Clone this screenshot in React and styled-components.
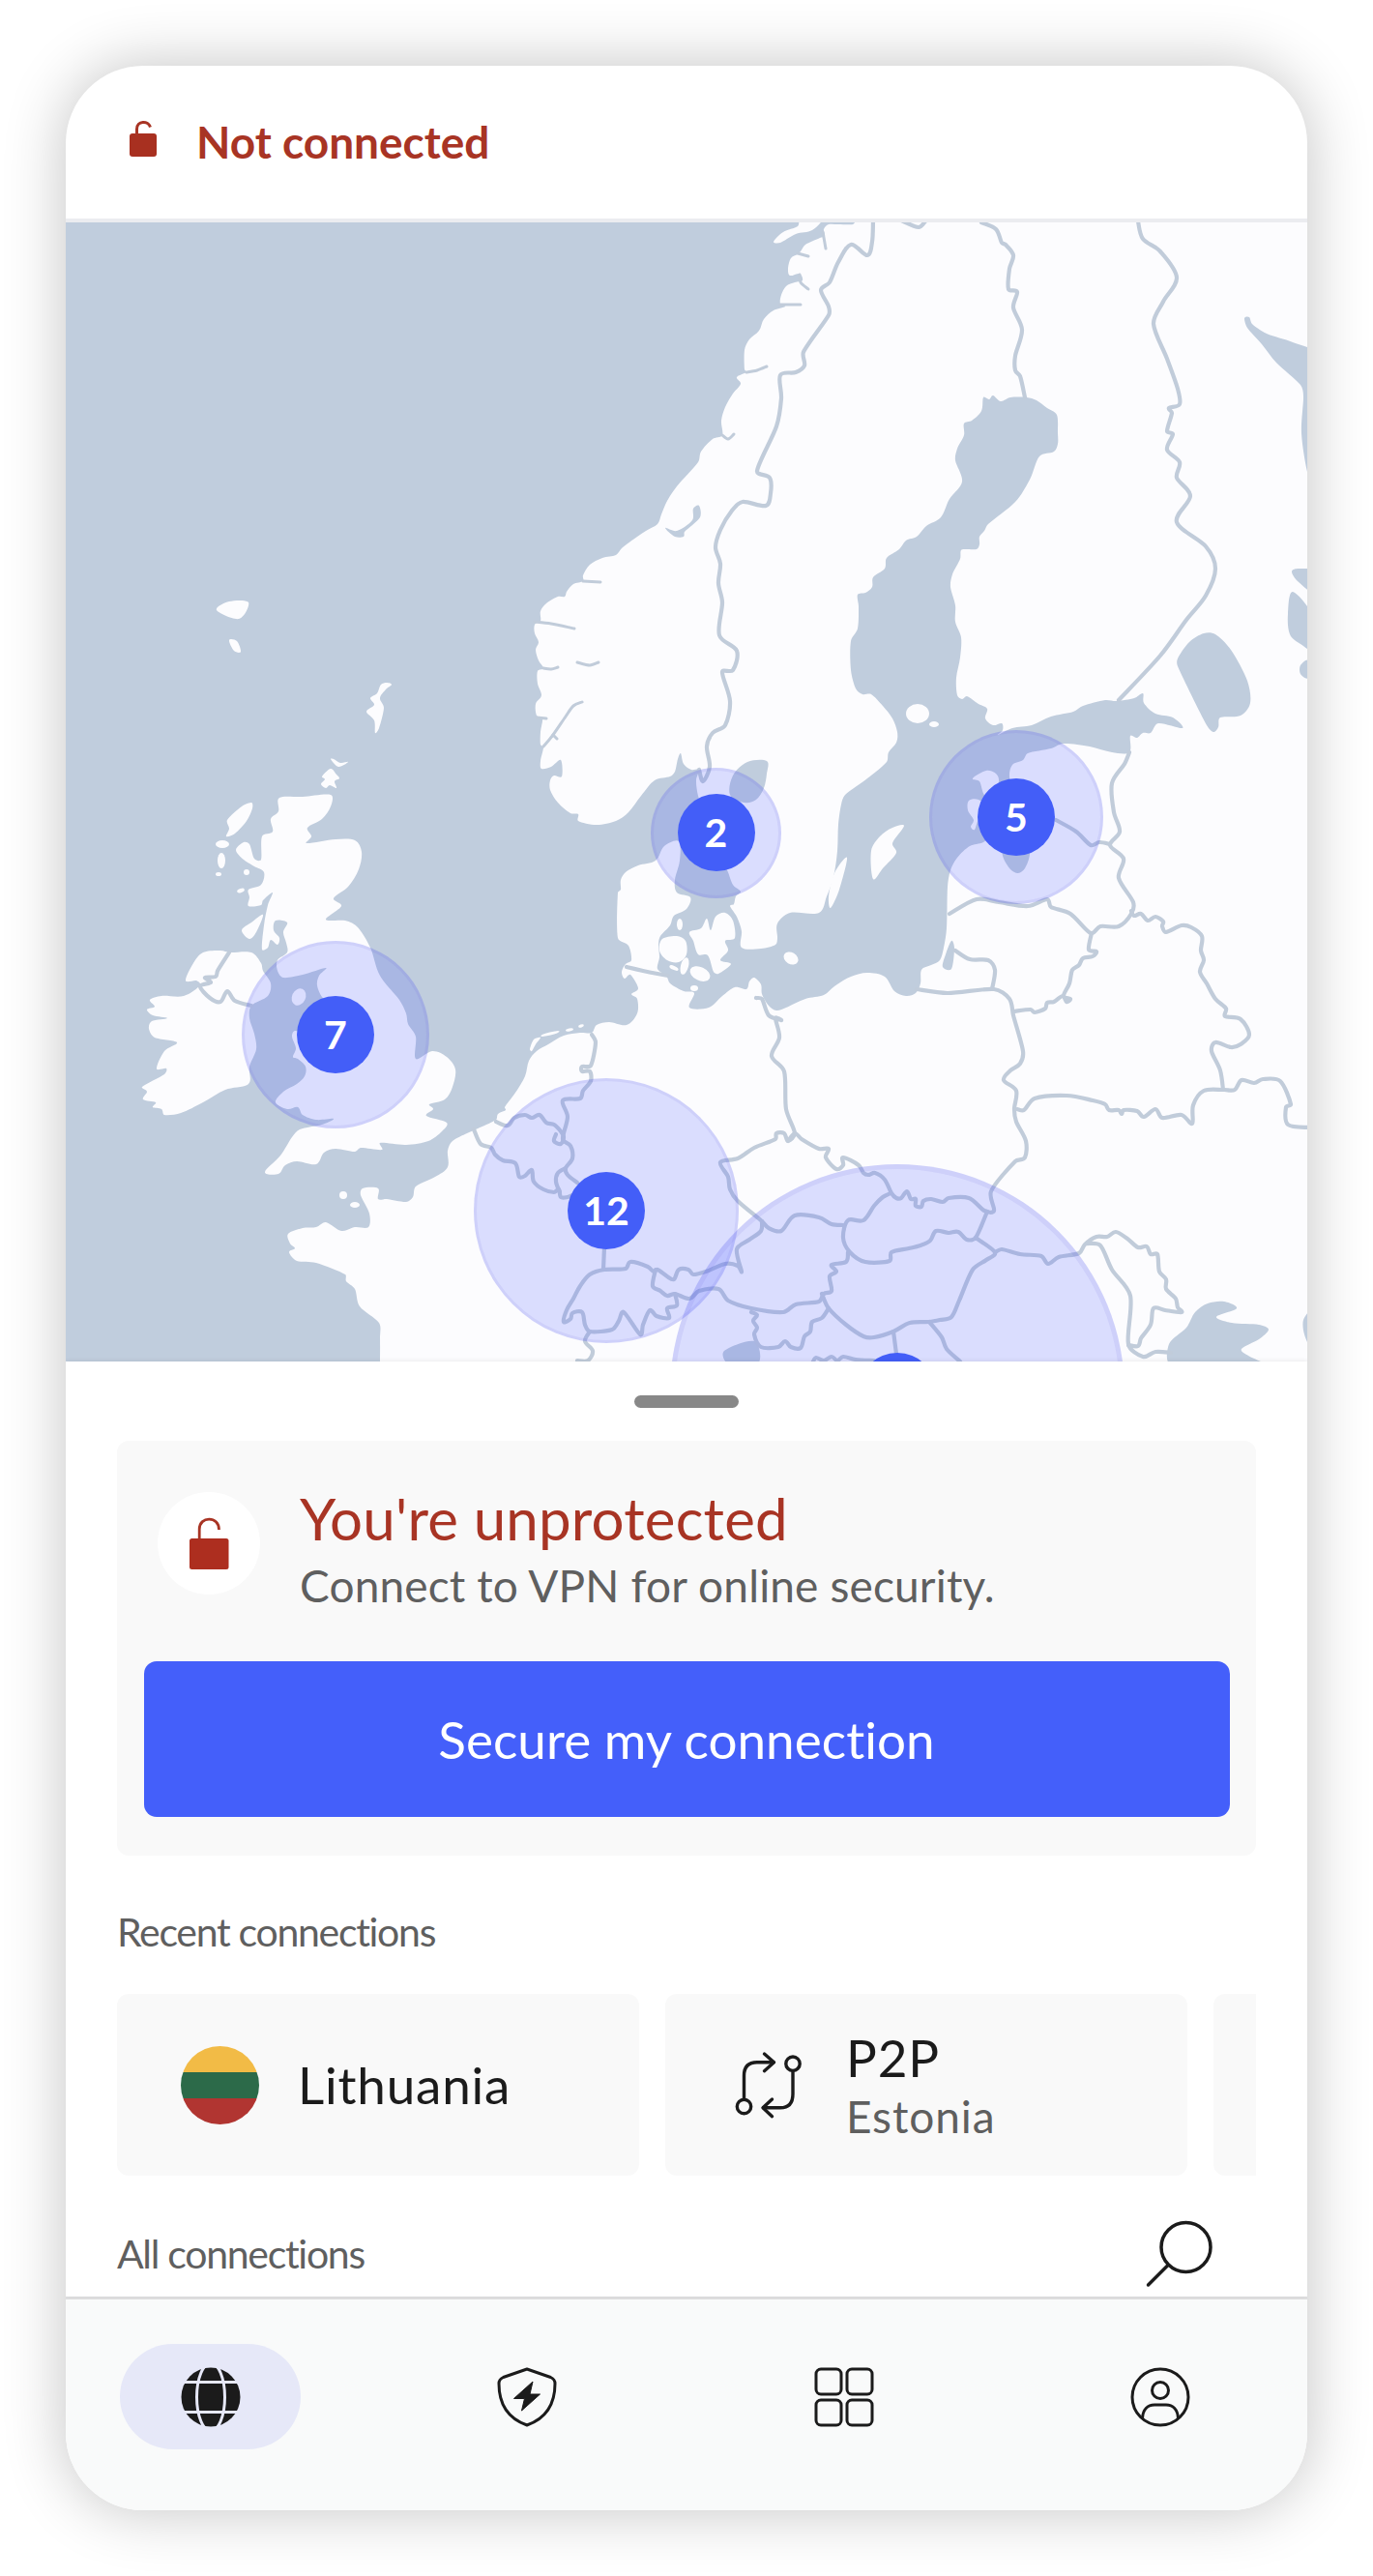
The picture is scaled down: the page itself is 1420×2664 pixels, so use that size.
import styled, { createGlobalStyle } from "styled-components";

const GlobalStyle = createGlobalStyle`
  body {
    margin: 0;
    background: #ffffff;
    font-family: Lato, "Open Sans", sans-serif;
    font-variant-ligatures: none;
  }
`

const Page = styled.div`
  box-sizing: border-box;
  width: 1420px;
  height: 2664px;
  padding: 68px;
`

const Phone = styled.div`
  display: flex;
  flex-direction: column;
  width: 1284px;
  height: 2528px;
  border-radius: 80px;
  overflow: hidden;
  background: #ffffff;
  box-shadow: 0 0 64px rgba(0, 0, 0, 0.24);
`

const Header = styled.header`
  display: flex;
  align-items: center;
  gap: 38px;
  height: 157px;
  padding: 0 0 1px 63px;
  border-bottom: 4px solid #ebecf0;
  color: #a83424;
  font-size: 46px;
  font-weight: 700;
`

const MapArea = styled.div`
  position: relative;
  flex: none;
  height: 1178px;
  overflow: hidden;
  background: #c0cddd;
`

const MapSvg = styled.svg`
  display: block;
  width: 100%;
  height: 100%;
`

const Cluster = styled.div`
  position: absolute;
  left: ${(p) => p.$x - 68 - p.$r}px;
  top: ${(p) => p.$y - 230 - p.$r}px;
  box-sizing: border-box;
  display: flex;
  align-items: center;
  justify-content: center;
  width: ${(p) => p.$r * 2}px;
  height: ${(p) => p.$r * 2}px;
  border: ${(p) => (p.$r > 200 ? 5 : 3)}px solid rgba(100, 90, 220, 0.11);
  border-radius: 50%;
  background: rgba(64, 82, 255, 0.18);
`

const Count = styled.span`
  flex: none;
  width: 80px;
  height: 80px;
  border-radius: 50%;
  background: #435ef8;
  color: #ffffff;
  font-size: 41px;
  font-weight: 700;
  line-height: 80px;
  text-align: center;
`

const Sheet = styled.main`
  position: relative;
  flex: 1;
  display: flex;
  flex-direction: column;
  padding: 35px 53px 0;
  background: #ffffff;
  box-shadow: 0 -1px 4px rgba(0, 0, 0, 0.07);
`

const Handle = styled.div`
  align-self: center;
  width: 108px;
  height: 13px;
  margin-bottom: 34px;
  border-radius: 7px;
  background: #888888;
`

const StatusCard = styled.section`
  padding: 46px 27.5px 40px;
  border-radius: 12px;
  background: #f9f9f9;
`

const StatusTop = styled.div`
  display: flex;
  gap: 41px;
  margin-bottom: 50px;
  padding-left: 14.500px;
`

const LockCircle = styled.div`
  display: flex;
  align-items: center;
  justify-content: center;
  width: 106px;
  height: 106px;
  margin-top: 7px;
  border-radius: 50%;
  background: #ffffff;
`

const Title = styled.h1`
  margin: 0 0 8px;
  color: #a83424;
  font-size: 60px;
  font-weight: 400;
  line-height: 68px;
  letter-spacing: 0.2px;
`

const Subtitle = styled.p`
  margin: 0;
  color: #5f5f5f;
  font-size: 46px;
  line-height: 56px;
  letter-spacing: 0.14px;
`

const SecureButton = styled.button`
  display: block;
  width: 100%;
  height: 161px;
  padding: 0;
  border: none;
  border-radius: 13px;
  background: #445ffa;
  color: #ffffff;
  font-family: inherit;
  font-size: 53px;
  letter-spacing: 0.05px;
  font-variant-ligatures: none;
`

const Label = styled.h2`
  margin: 0;
  color: #5f5f5f;
  font-size: 41px;
  font-weight: 400;
  line-height: 50px;
  letter-spacing: -1.3px;
`

const RecentSection = styled.section`
  display: flex;
  flex-direction: column;
  gap: 39px;
  margin-top: 54px;
`

const Recents = styled.div`
  display: flex;
  gap: 27px;
  overflow: hidden;
`

const RecentCard = styled.div`
  flex: none;
  box-sizing: border-box;
  display: flex;
  align-items: center;
  gap: 40px;
  width: 540px;
  height: 188px;
  padding-left: 66px;
  border-radius: 12px;
  background: #f9f9f9;
`

const Flag = styled.div`
  width: 81px;
  height: 81px;
  border-radius: 50%;
  background: linear-gradient(#f2bb46 33.3%, #2c6a49 33.3% 66.6%, #b13531 66.6%);
`

const Place = styled.div`
  color: #1b1b1b;
  font-size: 53px;
  line-height: 64px;
  letter-spacing: 0.8px;
`

const PlaceNote = styled.div`
  padding-top: 1px;
  color: #5f5f5f;
  font-size: 46px;
  line-height: 56px;
  letter-spacing: 0.9px;
`

const AllRow = styled.div`
  display: flex;
  align-items: center;
  justify-content: space-between;
  height: 70px;
  margin-top: 46px;
  padding-right: 43px;
`

const Nav = styled.nav`
  flex: none;
  box-sizing: border-box;
  display: flex;
  justify-content: space-between;
  height: 221px;
  padding: 46px 58px 0 56px;
  border-top: 3px solid #dededf;
  background: #f9fafa;
`

const NavItem = styled.a`
  display: flex;
  align-items: center;
  justify-content: center;
  width: 187px;
  height: 109px;
  border-radius: 55px;
  background: ${(p) => (p.$active ? "#e6e8f8" : "transparent")};
`

// turns "x,y x,y ..." into a rounded path through every point
const curve = (str, closed) => {
  const pts = str.trim().split(/\s+/).map((p) => p.split(",").map(Number));
  const n = pts.length;
  const at = (i) => (closed ? pts[(i + n) % n] : pts[Math.max(0, Math.min(n - 1, i))]);
  let d = `M${pts[0]}`;
  for (let i = 0; i < (closed ? n : n - 1); i++) {
    const [a, b, c, e] = [at(i - 1), at(i), at(i + 1), at(i + 2)];
    // handles never longer than the segment allows, so close points don't loop
    const len = Math.hypot(c[0] - b[0], c[1] - b[1]);
    const h = (p, q) => {
      const l = Math.hypot(q[0] - p[0], q[1] - p[1]) || 1;
      const k = Math.min(l / 6, len / 3) / l;
      return [(q[0] - p[0]) * k, (q[1] - p[1]) * k];
    };
    const u = h(a, c);
    const v = h(b, e);
    d += `C${(b[0] + u[0]).toFixed(1)} ${(b[1] + u[1]).toFixed(1)} ${(c[0] - v[0]).toFixed(1)} ${(c[1] - v[1]).toFixed(1)} ${c[0]} ${c[1]}`;
  }
  return closed ? d + "Z" : d;
};

const mainland = `
885,228 882,232 867,232 857,232 852,237 853,244 848,246 833,253 828,260 825,263 818,267 815,278 817,285 827,283 830,290 822,292
813,296 808,305 807,314 812,317 800,321 790,330 785,342 775,351 770,362 770,382 772,385 762,390 766,397 758,407
750,421 746,435 747,450 737,454 725,467 722,478 700,503 690,518 684,532 680,542 668,549 652,560 643,567 637,574 623,577
610,584 603,595 603,601 593,604 586,612 584,617 577,617 565,624 559,632 559,642 553,646 553,655 557,664 554,672
557,683 562,691 556,694 556,707 560,719 554,728 555,740 561,743 559,757 559,770 562,773 559,787 560,795 570,793
580,786 581,803 573,802 569,807 569,817 577,830 590,841 598,842 598,849 617,853 637,849 650,840 663,823 677,807
693,803 698,798 701,785 704,779 707,790 715,796 723,796 720,807 722,823 727,837 740,880 752,900 758,915 766,922
761,927 759,935 755,937 762,948 767,963 767,980 787,981 802,977 804,970 804,955 817,944 847,944 855,927 862,907
866,880 867,853 870,832 874,822 897,805 917,788 919,778 927,768 928,757 923,743 913,730 901,718 892,718 885,712
880,693 880,663 887,650 888,627 887,615 895,613 902,607 903,597 915,588 917,577 930,568 937,559 948,555 958,544
973,535 982,516 995,498 988,476 990,464 997,450 997,438 1005,435 1015,425 1017,411 1023,413 1027,409 1035,415
1045,411 1062,411 1072,414 1083,422 1093,429 1094,448 1094,459 1090,467 1075,472 1065,496 1050,519 1022,542
1018,549 1013,555 1013,563 1010,568 1000,568 994,569 993,578 985,594 983,607 988,626 988,643 994,659 993,680
989,701 990,719 995,723 1000,720 1012,728 1021,733 1019,743 1027,750 1036,748 1037,755 1032,760 1047,753 1067,750
1087,741 1110,736 1120,730 1143,724 1155,725 1173,722 1182,717 1183,727 1195,738 1213,742 1223,753 1198,748
1190,758 1182,758 1176,763 1169,761 1168,778 1150,778 1127,772 1100,769 1087,774 1063,779 1058,786 1047,791
1044,803 1050,830 1062,860 1065,883 1060,898 1053,903 1045,899 1037,885 1036,866 1029,862 1017,871 1003,875 990,887
983,900 980,917 979,960 976,980 972,993 963,998 953,1003 952,1017 947,1027 937,1030 925,1025 915,1010 897,1006
880,1010 863,1020 852,1029 833,1033 813,1042 803,1045 795,1040 788,1028 787,1018 780,1011 775,1015 772,1023
760,1021 747,1030 733,1042 713,1042 718,1027 707,1025 693,1017 689,1009 680,1002 682,990 681,977 683,968 693,957 697,947
710,940 714,928 700,923 698,910 703,890 702,870 687,875 678,890 660,895 647,902 642,910 642,920 639,923 639,970
650,978 653,993 647,997 643,1005 646,1012 652,1008 660,1022 653,1028 659,1033 659,1048 648,1060 630,1057 617,1060
612,1068 600,1068 583,1071 567,1080 555,1087 547,1097 543,1113 533,1130 522,1145 523,1148 515,1152 513,1158
492,1168 483,1172 468,1180 463,1190 463,1207 450,1217 430,1227 427,1238 420,1243 400,1240 391,1240 391,1229
375,1229 373,1236 382,1255 381,1269 367,1269 353,1273 337,1264 327,1269 313,1270 298,1276 300,1286 305,1291
299,1295 307,1304 327,1306 357,1318 358,1325 367,1333 372,1351 392,1368 393,1383 393,1412`

const islands = [
  // Great Britain
  `289,825 313,824 342,822 342,834 333,847 318,856 322,865 317,872 347,868 367,869 374,881 371,899 360,917 345,929
  353,937 337,951 357,952 370,959 383,980 393,1009 413,1034 420,1048 422,1059 430,1072 430,1095 447,1087 462,1093
  471,1106 468,1124 460,1137 444,1142 448,1147 441,1154 462,1161 457,1170 443,1180 420,1184 393,1182 395,1189 373,1187
  367,1191 347,1188 335,1192 327,1204 307,1201 295,1205 288,1214 274,1212 290,1195 302,1176 310,1168 333,1163
  345,1157 327,1158 313,1153 308,1145 297,1147 285,1140 293,1129 307,1121 315,1113 316,1103 308,1095 303,1093
  306,1084 302,1072 305,1066 330,1070 345,1045 333,1031 328,1019 330,1009 337,1001 313,1008 293,1011 287,1004
  287,993 297,985 296,975 293,964 297,954 285,952 283,962 289,970 287,977 280,972 277,980 271,982 273,957 277,936
  282,923 272,931 270,936 257,937 258,928 257,920 270,915 273,902 263,896 252,889 244,879 252,871 258,873 263,888
  270,889 271,865 282,860 280,847 288,839`,
  // Ireland
  `210,985 228,983 238,985 260,985 270,996 272,1004 280,1017 277,1030 260,1040 258,1053 263,1069 265,1085 258,1103
  257,1121 233,1127 210,1140 187,1151 170,1153 167,1147 158,1145 161,1140 148,1137 152,1129 147,1124 170,1111 172,1105
  162,1105 170,1087 183,1078 160,1073 154,1064 157,1056 173,1053 158,1050 152,1044 160,1041 155,1034 167,1030
  190,1030 207,1019 203,1014 192,1014 200,996`,
  "260,830 250,834 235,848 237,857 234,865 243,862 255,849 261,836",
  "272,946 260,954 250,962 258,971 265,964",
  "342,795 333,803 336,806 332,811 337,815 341,812 348,815 346,808 351,805 348,801",
  "342,785 350,793 360,788 352,789 345,785",
  "400,706 405,708 399,713 393,722 397,732 392,753 388,758 387,745 379,736 387,729 383,722 390,717 394,708",
  "224,631 237,622 257,623 247,640",
  "237,662 245,663 249,674 242,673",
  // Denmark
  "685,971 700,968 709,973 710,987 702,995 690,993 682,983",
  "713,964 725,960 731,950 735,962 740,948 750,944 758,952 760,970 750,973 753,983 745,993 756,997 743,1007 738,1005 732,988 722,987 717,973",
  "876,887 868,920 859,939 857,927 863,903",
  "935,854 923,872 927,882 913,898 903,909 901,880 910,865 923,856",
  "1006,805 1020,797 1030,800 1033,808 1027,822 1018,822 1013,808",
  "1002,828 1012,827 1020,835 1012,847 1008,858 1004,855 1007,848 1001,838",
  "548,1085 552,1075 559,1073 554,1080 550,1087",
  "800,250 810,240 825,234 828,226 850,226 840,238 823,242 807,251",
]

// cx, cy, rx, ry, rotation
const islets = [
  [309, 1031, 7, 9, 25], [230, 873, 7, 4, 0], [229, 890, 4, 8, 0], [226, 904, 3, 2, 0], [255, 902, 3, 3, 0],
  [249, 921, 4, 2, -20], [355, 1236, 4, 4, 0], [367, 1246, 5, 3, 0], [724, 1007, 11, 7, 25], [708, 999, 4, 9, 15],
  [703, 956, 3, 6, 0], [697, 1001, 5, 2, 25], [718, 1022, 4, 3, 0], [818, 991, 8, 6, 30], [949, 738, 12, 10, 0],
  [966, 749, 5, 3, 0], [569, 1069, 10, 1.6, -14], [589, 1065, 4, 1.5, -10], [601, 1061, 3, 1.5, -20],
]

const lakes = [
  "793,787 773,788 758,802 755,822 770,830 782,827 790,815 793,800",
  "1245,655 1230,664 1218,681 1218,689 1248,750 1255,757 1260,752 1262,742 1283,740 1293,727 1290,704 1273,672 1257,656",
  "1287,329 1292,328 1295,335 1310,345 1337,354 1358,366 1358,500 1352,488 1346,448 1348,410 1345,398 1320,375 1305,356 1290,339",
  "1336,591 1343,588 1358,591 1358,612 1342,601",
  "1337,612 1358,638 1358,671 1345,666 1334,656 1332,635",
  "1353,683 1345,688 1345,697 1353,701",
  "984,973 987,980 984,1002 975,1000 978,987",
  "1212,1412 1209,1390 1227,1373 1236,1357 1249,1348 1266,1346 1279,1353 1258,1362 1274,1368 1302,1370 1312,1375 1302,1385 1284,1395 1291,1402 1308,1412",
  "1356,1357 1348,1365 1349,1380 1356,1392",
  "749,1397 780,1387 784,1410 753,1410",
  "688,546 700,549 716,538 717,526 723,523 724,535 708,550 707,555 698,555",
]

const fjords = [
  "603,601 621,602", "553,643 570,645 594,650", "562,691 570,692 577,690", "597,685 610,688 619,685", "555,742 565,743",
  "602,726 593,730 585,741 572,760 562,772", "572,760 576,764", "807,315 828,315", "772,385 783,383 793,379", "747,450 753,454 759,449",
  "825,262 836,265", "827,284 828,292 836,299", "851,240 854,257",
]

const borders = [
  `903,229 902,250 897,264 880,253 867,271 858,292 849,300 857,317 857,326 831,364 832,378 823,385 807,388 808,412
  803,441 783,487 796,494 797,510 792,523 768,519 757,528 745,548 740,566 745,583 743,603 747,623 744,657 762,673
  758,693 747,695 755,725 750,750 737,758 731,772 734,793 727,808 723,796`,
  `1015,230 1030,237 1036,251 1040,253 1048,264 1044,278 1043,299 1052,302 1048,318 1057,341 1050,368 1050,383 1055,389 1060,411`,
  "932,228 950,235 957,229",
  `1177,229 1182,247 1200,260 1217,287 1203,312 1193,335 1207,371 1218,402 1220,418 1209,422 1212,427 1207,446 1213,449
  1207,465 1220,478 1217,494 1231,513 1217,540 1247,565 1257,588 1247,616 1227,641 1200,678 1157,724`,
  `1168,778 1163,790 1150,810 1152,840 1158,860 1148,874 1162,888 1157,908 1172,933 1170,945 1157,958 1138,958
  1128,965 1107,945 1087,938 1083,930 1063,937 1033,933 1010,930 982,945`,
  "1092,848 1113,860 1128,874 1137,871 1148,873",
  `1170,942 1173,947 1180,945 1187,952 1195,948 1203,953 1202,958 1206,964 1222,957 1232,959 1243,968 1242,983 1245,993 1241,1005 1248,1017
  1257,1033 1268,1043 1267,1051 1283,1054 1292,1070 1283,1080 1273,1083 1257,1078 1253,1087 1262,1107 1265,1127`,
  `1052,1147 1059,1148 1070,1136 1103,1133 1130,1138 1143,1142 1147,1148 1157,1148 1160,1152 1162,1148 1176,1149 1183,1155 1195,1147 1202,1156 1222,1153
  1233,1162 1234,1143 1245,1128 1266,1127 1277,1127 1284,1117 1297,1120 1306,1116 1324,1118 1335,1142 1330,1145 1332,1163 1354,1166`,
  `1129,965 1126,982 1134,984 1130,989 1120,991 1116,998 1109,1003 1106,1017 1100,1030 1107,1033 1103,1036 1099,1030 1090,1036 1083,1037 1081,1043 1070,1047 1066,1044 1048,1046`,
  "988,983 1003,992 1022,993 1029,1003 1026,1023",
  `948,1023 980,1027 1028,1023 1044,1033 1048,1050 1058,1087 1055,1100 1045,1107 1038,1117 1051,1128 1049,1147 1051,1160
  1061,1180 1060,1197 1050,1201 1025,1232 1028,1252 1018,1252 1002,1239 981,1239 975,1243 963,1240 955,1242 953,1248 947,1247 947,1240 942,1240 938,1232 932,1239
  927,1239 922,1234 915,1220 905,1213 898,1215 893,1213 888,1205 872,1197 872,1205 865,1209 854,1197 857,1188 847,1188 829,1178 822,1172 815,1180`,
  "921,1234 913,1238 904,1247 893,1262 877,1262 872,1280 879,1295 895,1305 920,1304 922,1295 940,1291 952,1288 962,1283 968,1273 981,1275 991,1274 1000,1282 1009,1280 1021,1253",
  "1009,1280 1029,1295 1020,1303 1006,1313 992,1345 984,1362 972,1365 961,1367 941,1368 924,1377 904,1383 893,1382 875,1370 857,1353 850,1338",
  `1029,1295 1036,1292 1055,1297 1077,1299 1084,1307 1095,1300 1116,1296 1122,1287 1134,1279 1145,1279 1154,1274 1166,1281 1177,1290 1186,1289 1190,1297 1197,1297
  1199,1315 1206,1323 1206,1333 1216,1343 1218,1352 1222,1357 1205,1355 1193,1353 1190,1370 1180,1384 1177,1392 1167,1391`,
  "1124,1286 1138,1288 1150,1313 1169,1340 1167,1390 1182,1403 1195,1398 1211,1399",
  "961,1367 974,1383 979,1395 993,1408",
  "924,1377 927,1400",
  `782,1032 788,1033 795,1050 808,1055 802,1053 806,1073 798,1092 811,1108 813,1147 822,1172 815,1180 811,1172 803,1172 802,1178 780,1187
  763,1198 745,1202 753,1217 755,1230 763,1242 788,1263 795,1270 808,1273 822,1257 847,1259 860,1266 872,1267`,
  `788,1263 787,1273 775,1282 762,1292 767,1315 763,1309 750,1307 730,1315 717,1318 712,1313 702,1313 697,1323 690,1320 680,1313 676,1315
  670,1310 652,1305 647,1312 625,1313 610,1318 600,1330 593,1343 586,1355 583,1367 590,1364 592,1358 602,1357 605,1370 610,1377 633,1375 640,1366 645,1357 662,1380
  665,1370 672,1355 679,1361 692,1363 690,1353 700,1350 698,1338`,
  `678,1313 675,1330 683,1335 690,1340 698,1338 713,1343 723,1335 743,1333 753,1345 777,1353 810,1357 823,1349 847,1346 852,1338 860,1335 858,1320 865,1315
  860,1308 875,1305 877,1295`,
  "777,1357 783,1360 779,1366 783,1373 780,1380 787,1393 805,1393 812,1387 818,1393 828,1394 832,1382 838,1377 840,1367 850,1363 857,1353",
  "625,1290 624,1313",
  "490,1168 497,1183 508,1187 512,1194 520,1200 533,1203 537,1217 543,1216 550,1210 552,1222 562,1230 573,1233 578,1230 580,1238 587,1238 592,1236",
  "513,1160 525,1164 532,1156 543,1153 550,1156 558,1153 565,1161 573,1163 580,1170 583,1176 580,1183 573,1180 575,1173",
  `612,1070 616,1078 611,1102 602,1103 602,1108 610,1108 611,1118 603,1128 600,1136 582,1138 587,1155 582,1178 590,1185
  592,1198 585,1208 587,1215 597,1223`,
  "585,1208 577,1213 575,1222 579,1233",
  "610,1377 605,1387 613,1397 608,1407 597,1407",
  "648,1000 665,1004 680,1007 691,1009",
  "841,1408 844,1404 852,1407 860,1403 866,1407 872,1403 885,1406 904,1407",
  "237,985 225,1004 223,1010 212,1011 218,1016 207,1020 217,1032 228,1036 235,1025 243,1035 260,1040",
]

const clusters = [
  { x: 347, y: 1069.5, r: 97, count: 7 },
  { x: 740.5, y: 861, r: 67.5, count: 2 },
  { x: 1051, y: 845, r: 90, count: 5 },
  { x: 627, y: 1252, r: 137, count: 12 },
  { x: 928, y: 1439, r: 235, count: "" },
]

const EuropeMap = () => (
  <MapSvg viewBox="68 230 1284 1178">
    <g fill="#fcfcfe">
      <path d={curve(mainland) + "L1360 1412L1360 226L885 226Z"} />
      {islands.map((p) => <path key={p} d={curve(p, true)} />)}
      {islets.map(([cx, cy, rx, ry, a]) => (
        <ellipse key={`${cx}-${cy}`} cx={cx} cy={cy} rx={rx} ry={ry} transform={`rotate(${a} ${cx} ${cy})`} />
      ))}
    </g>
    <g fill="#c0cddd">
      {lakes.map((p) => <path key={p} d={curve(p, true)} />)}
    </g>
    <g fill="none" stroke="#c1ccda" strokeLinecap="round" strokeLinejoin="round">
      {fjords.map((p) => <path key={p} d={curve(p)} strokeWidth="3" />)}
      {borders.map((p) => <path key={p} d={curve(p)} strokeWidth="4.2" />)}
    </g>
  </MapSvg>
)

const LockSvg = styled.svg`
  margin-bottom: 6px;
`

const SmallLock = () => (
  <LockSvg width="34" height="42" viewBox="131 124 34 42">
    <rect x="134" y="139" width="28" height="24" rx="3" fill="#a83020" />
    <path d="M141.5 140V134.5C141.5 125.5 153.5 125.5 155.5 132.5" fill="none" stroke="#a83424" strokeWidth="3" />
  </LockSvg>
)

const BigLock = () => (
  <svg width="44" height="56" viewBox="194 1568 44 56">
    <rect x="196" y="1591" width="40.5" height="32" rx="2.5" fill="#ad2e1f" />
    <path d="M206.2 1592V1581.5C206.2 1567.5 226.5 1567.5 226.5 1582" fill="none" stroke="#a83424" strokeWidth="2.8" />
  </svg>
)

const P2PIcon = () => (
  <svg width="81" height="81" viewBox="755 2115.5 81 81" fill="none" stroke="#1b1b1b" strokeWidth="3.4" strokeLinecap="round" strokeLinejoin="round">
    <circle cx="770.5" cy="2178" r="7.2" />
    <path d="M770.5 2170.500V2146Q770.5 2132.3 784 2132.3H801" />
    <path d="M791.5 2123.5L801.5 2132.3L791.5 2141.2" />
    <circle cx="821" cy="2133.7" r="7.2" />
    <path d="M821 2141.5V2165Q821 2179.3 808 2179.3H790.5" />
    <path d="M799.5 2170.5L790 2179.3L799.5 2188.2" />
  </svg>
)

const SearchIcon = () => (
  <svg width="72" height="70" viewBox="1184 2296 72 70" fill="none" stroke="#1b1b1b" strokeWidth="3.5" strokeLinecap="round">
    <circle cx="1226.5" cy="2324" r="25.5" />
    <path d="M1208 2342.5L1187.5 2363" />
  </svg>
)

const GlobeIcon = () => (
  <svg width="62" height="62" viewBox="-31 -31 62 62">
    <circle r="30.5" fill="#1b1b1b" />
    <g fill="none" stroke="#e6e8f8" strokeWidth="3">
      <ellipse rx="14.5" ry="35" />
      <path d="M-31 -15.5H31M-31 15.5H31" />
    </g>
  </svg>
)

const ShieldIcon = () => (
  <svg width="64" height="64" viewBox="-32 -32 64 64">
    <path d="M0 -29L24.5 -20.5Q29 -18.5 29 -14C29 10 17 23 0 29C-17 23 -29 10 -29 -14Q-29 -18.5 -24.5 -20.5Z" fill="none" stroke="#1b1b1b" strokeWidth="3" strokeLinejoin="round" />
    <path d="M6 -16L-13.5 1.5H-2.5L-5.5 14L13.5 -3H3Z" fill="#1b1b1b" stroke="#1b1b1b" strokeWidth="1" strokeLinejoin="round" />
  </svg>
)

const GridIcon = () => (
  <svg width="64" height="64" viewBox="-32 -32 64 64" fill="none" stroke="#1b1b1b" strokeWidth="3">
    <rect x="-29" y="-29" width="26" height="26" rx="5" />
    <rect x="3" y="-29" width="26" height="26" rx="5" />
    <rect x="-29" y="3" width="26" height="26" rx="5" />
    <rect x="3" y="3" width="26" height="26" rx="5" />
  </svg>
)

const ProfileIcon = () => (
  <svg width="64" height="64" viewBox="-32 -32 64 64" fill="none" stroke="#1b1b1b" strokeWidth="3">
    <circle r="29" />
    <circle cy="-7" r="8.5" />
    <path d="M-18.5 22C-18 13 -13 8 -6 8H6C13 8 18 13 18.5 22" />
  </svg>
)

function App() {
  return (
    <Page>
      <GlobalStyle />
      <Phone>
        <Header>
          <SmallLock />
          <span>Not connected</span>
        </Header>

        <MapArea>
          <EuropeMap />
          {clusters.map((c) => (
            <Cluster key={c.x} $x={c.x} $y={c.y} $r={c.r}>
              <Count>{c.count}</Count>
            </Cluster>
          ))}
        </MapArea>

        <Sheet>
          <Handle />
          <StatusCard>
            <StatusTop>
              <LockCircle>
                <BigLock />
              </LockCircle>
              <div>
                <Title>You're unprotected</Title>
                <Subtitle>Connect to VPN for online security.</Subtitle>
              </div>
            </StatusTop>
            <SecureButton>Secure my connection</SecureButton>
          </StatusCard>

          <RecentSection>
            <Label>Recent connections</Label>
            <Recents>
              <RecentCard>
                <Flag />
                <Place>Lithuania</Place>
              </RecentCard>
              <RecentCard>
                <P2PIcon />
                <div>
                  <Place>P2P</Place>
                  <PlaceNote>Estonia</PlaceNote>
                </div>
              </RecentCard>
              <RecentCard />
            </Recents>
          </RecentSection>

          <AllRow>
            <Label>All connections</Label>
            <SearchIcon />
          </AllRow>
        </Sheet>

        <Nav>
          <NavItem $active><GlobeIcon /></NavItem>
          <NavItem><ShieldIcon /></NavItem>
          <NavItem><GridIcon /></NavItem>
          <NavItem><ProfileIcon /></NavItem>
        </Nav>
      </Phone>
    </Page>
  );
}

export default App;
